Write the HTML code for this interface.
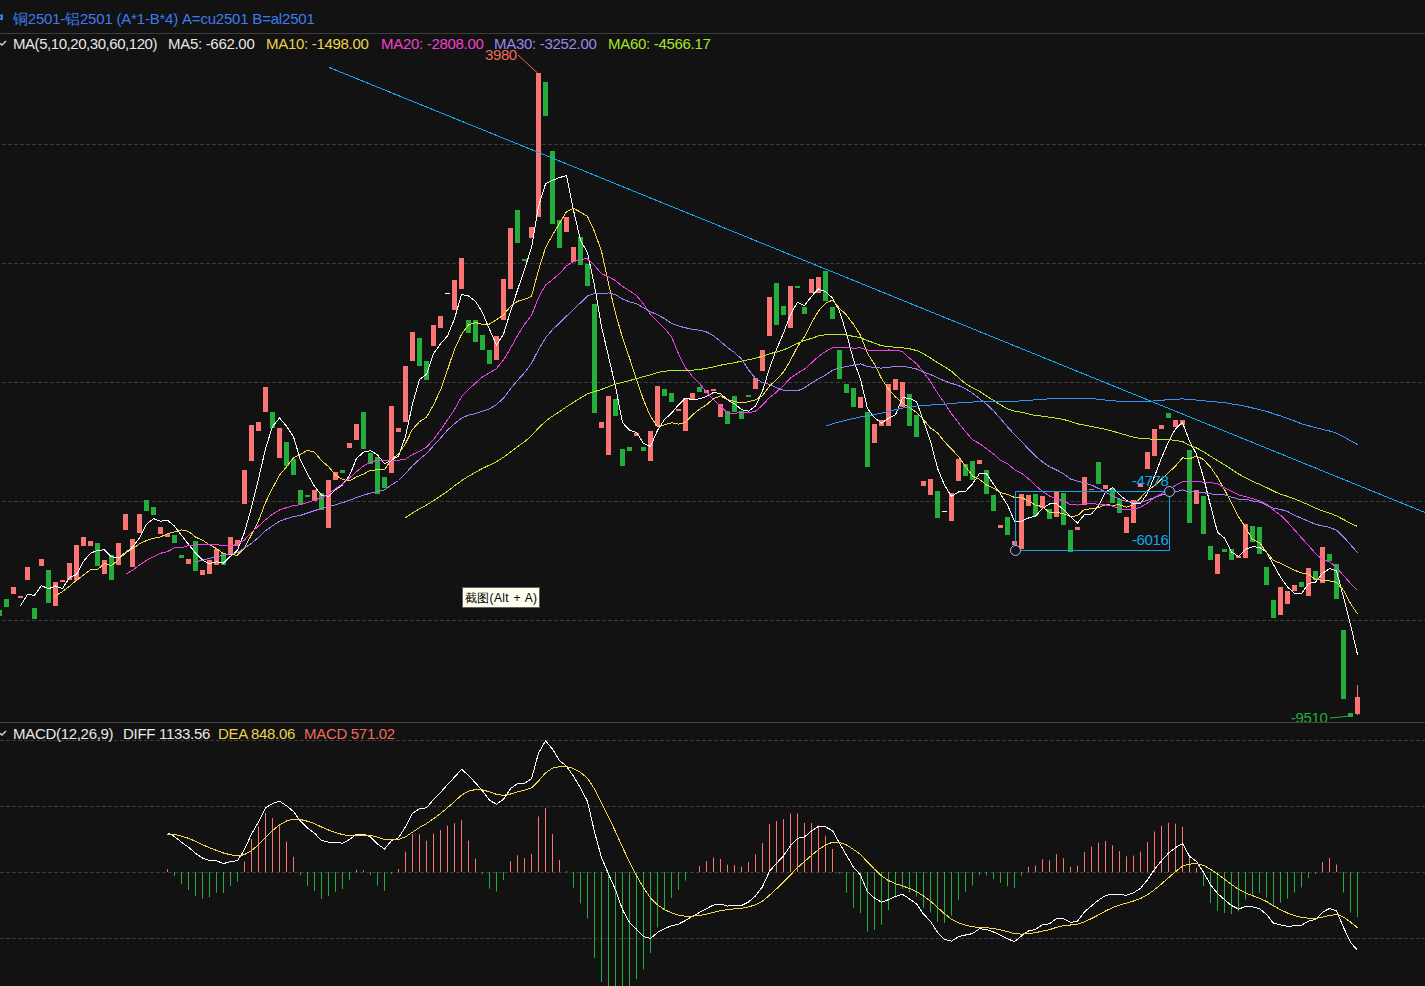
<!DOCTYPE html>
<html><head><meta charset="utf-8"><style>
html,body{margin:0;padding:0;background:#121212;width:1425px;height:986px;overflow:hidden}
svg{position:absolute;left:0;top:0}
.t{position:absolute;font-family:"Liberation Sans",sans-serif;white-space:nowrap}
</style></head><body>
<svg width="1425" height="986" viewBox="0 0 1425 986">
<line x1="0" y1="33.5" x2="1425" y2="33.5" stroke="#3c3c3c"/>
<line x1="0" y1="722.5" x2="1425" y2="722.5" stroke="#444"/>
<line x1="0" y1="144.5" x2="1425" y2="144.5" stroke="#3a3a3a" stroke-width="1" stroke-dasharray="4,2" stroke-dashoffset="4" shape-rendering="crispEdges"/><line x1="0" y1="263.5" x2="1425" y2="263.5" stroke="#3a3a3a" stroke-width="1" stroke-dasharray="4,2" stroke-dashoffset="4" shape-rendering="crispEdges"/><line x1="0" y1="382.5" x2="1425" y2="382.5" stroke="#3a3a3a" stroke-width="1" stroke-dasharray="4,2" stroke-dashoffset="4" shape-rendering="crispEdges"/><line x1="0" y1="501.5" x2="1425" y2="501.5" stroke="#3a3a3a" stroke-width="1" stroke-dasharray="4,2" stroke-dashoffset="4" shape-rendering="crispEdges"/><line x1="0" y1="620.5" x2="1425" y2="620.5" stroke="#3a3a3a" stroke-width="1" stroke-dasharray="4,2" stroke-dashoffset="4" shape-rendering="crispEdges"/><line x1="0" y1="740.5" x2="1425" y2="740.5" stroke="#3a3a3a" stroke-width="1" stroke-dasharray="4,2" stroke-dashoffset="0" shape-rendering="crispEdges"/><line x1="0" y1="806.5" x2="1425" y2="806.5" stroke="#3a3a3a" stroke-width="1" stroke-dasharray="4,2" stroke-dashoffset="0" shape-rendering="crispEdges"/><line x1="0" y1="872.5" x2="1425" y2="872.5" stroke="#3a3a3a" stroke-width="1" stroke-dasharray="4,2" stroke-dashoffset="0" shape-rendering="crispEdges"/><line x1="0" y1="938.5" x2="1425" y2="938.5" stroke="#3a3a3a" stroke-width="1" stroke-dasharray="4,2" stroke-dashoffset="0" shape-rendering="crispEdges"/><g shape-rendering="crispEdges"><rect x="-3" y="610" width="5" height="6" fill="#23ad3a"/><rect x="4" y="599" width="5" height="8" fill="#23ad3a"/><rect x="11" y="587" width="5" height="7" fill="#fa7474"/><rect x="18" y="596" width="5" height="2" fill="#fa7474"/><rect x="25" y="567" width="5" height="13" fill="#fa7474"/><rect x="32" y="608" width="5" height="11" fill="#23ad3a"/><rect x="39" y="559" width="5" height="7" fill="#fa7474"/><rect x="46" y="570" width="5" height="33" fill="#23ad3a"/><rect x="53" y="582" width="5" height="24" fill="#fa7474"/><rect x="60" y="580" width="5" height="2" fill="#fa7474"/><rect x="67" y="563" width="5" height="17" fill="#fa7474"/><rect x="74" y="545" width="5" height="35" fill="#fa7474"/><rect x="81" y="537" width="5" height="9" fill="#fa7474"/><rect x="88" y="541" width="5" height="5" fill="#fa7474"/><rect x="95" y="543" width="5" height="23" fill="#23ad3a"/><rect x="102" y="560" width="5" height="14" fill="#fa7474"/><rect x="109" y="555" width="5" height="25" fill="#23ad3a"/><rect x="116" y="543" width="5" height="22" fill="#fa7474"/><rect x="123" y="514" width="5" height="16" fill="#fa7474"/><rect x="130" y="539" width="5" height="28" fill="#fa7474"/><rect x="137" y="514" width="5" height="19" fill="#fa7474"/><rect x="144" y="500" width="5" height="11" fill="#23ad3a"/><rect x="151" y="507" width="5" height="8" fill="#23ad3a"/><rect x="158" y="527" width="5" height="7" fill="#fa7474"/><rect x="165" y="534" width="5" height="3" fill="#fa7474"/><rect x="172" y="535" width="5" height="8" fill="#23ad3a"/><rect x="179" y="555" width="5" height="3" fill="#23ad3a"/><rect x="186" y="559" width="5" height="5" fill="#fa7474"/><rect x="193" y="541" width="5" height="30" fill="#23ad3a"/><rect x="200" y="570" width="5" height="5" fill="#fa7474"/><rect x="207" y="560" width="5" height="14" fill="#fa7474"/><rect x="214" y="549" width="5" height="16" fill="#fa7474"/><rect x="221" y="553" width="5" height="12" fill="#23ad3a"/><rect x="228" y="537" width="5" height="17" fill="#fa7474"/><rect x="235" y="540" width="5" height="6" fill="#fa7474"/><rect x="242" y="470" width="5" height="34" fill="#fa7474"/><rect x="249" y="425" width="5" height="36" fill="#fa7474"/><rect x="256" y="422" width="5" height="9" fill="#fa7474"/><rect x="263" y="387" width="5" height="25" fill="#fa7474"/><rect x="270" y="412" width="5" height="16" fill="#23ad3a"/><rect x="277" y="428" width="5" height="30" fill="#fa7474"/><rect x="284" y="442" width="5" height="24" fill="#23ad3a"/><rect x="291" y="459" width="5" height="16" fill="#23ad3a"/><rect x="298" y="490" width="5" height="14" fill="#23ad3a"/><rect x="305" y="495" width="5" height="2" fill="#23ad3a"/><rect x="312" y="490" width="5" height="11" fill="#fa7474"/><rect x="319" y="493" width="5" height="17" fill="#23ad3a"/><rect x="326" y="480" width="5" height="48" fill="#fa7474"/><rect x="333" y="472" width="5" height="8" fill="#fa7474"/><rect x="340" y="470" width="5" height="3" fill="#23ad3a"/><rect x="347" y="443" width="5" height="5" fill="#fa7474"/><rect x="354" y="424" width="5" height="16" fill="#fa7474"/><rect x="361" y="412" width="5" height="37" fill="#23ad3a"/><rect x="368" y="453" width="5" height="11" fill="#23ad3a"/><rect x="375" y="457" width="5" height="37" fill="#23ad3a"/><rect x="382" y="477" width="5" height="11" fill="#23ad3a"/><rect x="389" y="406" width="5" height="67" fill="#fa7474"/><rect x="396" y="428" width="5" height="4" fill="#fa7474"/><rect x="403" y="366" width="5" height="56" fill="#fa7474"/><rect x="410" y="332" width="5" height="29" fill="#fa7474"/><rect x="417" y="338" width="5" height="28" fill="#23ad3a"/><rect x="424" y="361" width="5" height="19" fill="#23ad3a"/><rect x="431" y="325" width="5" height="21" fill="#fa7474"/><rect x="438" y="316" width="5" height="12" fill="#fa7474"/><rect x="445" y="293" width="5" height="1" fill="#ffffff"/><rect x="452" y="280" width="5" height="30" fill="#fa7474"/><rect x="459" y="258" width="5" height="31" fill="#fa7474"/><rect x="466" y="320" width="5" height="13" fill="#23ad3a"/><rect x="473" y="320" width="5" height="22" fill="#23ad3a"/><rect x="480" y="335" width="5" height="15" fill="#23ad3a"/><rect x="487" y="350" width="5" height="14" fill="#23ad3a"/><rect x="494" y="336" width="5" height="24" fill="#fa7474"/><rect x="501" y="279" width="5" height="41" fill="#fa7474"/><rect x="508" y="228" width="5" height="61" fill="#fa7474"/><rect x="515" y="210" width="5" height="33" fill="#23ad3a"/><rect x="522" y="259" width="5" height="2" fill="#23ad3a"/><rect x="529" y="227" width="5" height="11" fill="#fa7474"/><rect x="536" y="73" width="5" height="144" fill="#fa7474"/><rect x="543" y="82" width="5" height="34" fill="#23ad3a"/><rect x="550" y="151" width="5" height="73" fill="#23ad3a"/><rect x="557" y="220" width="5" height="28" fill="#23ad3a"/><rect x="564" y="217" width="5" height="15" fill="#fa7474"/><rect x="571" y="247" width="5" height="15" fill="#fa7474"/><rect x="578" y="237" width="5" height="28" fill="#23ad3a"/><rect x="585" y="264" width="5" height="22" fill="#23ad3a"/><rect x="592" y="304" width="5" height="109" fill="#23ad3a"/><rect x="599" y="422" width="5" height="6" fill="#fa7474"/><rect x="606" y="396" width="5" height="59" fill="#fa7474"/><rect x="613" y="399" width="5" height="17" fill="#23ad3a"/><rect x="620" y="449" width="5" height="17" fill="#23ad3a"/><rect x="627" y="447" width="5" height="4" fill="#23ad3a"/><rect x="634" y="433" width="5" height="3" fill="#fa7474"/><rect x="641" y="447" width="5" height="4" fill="#23ad3a"/><rect x="648" y="431" width="5" height="30" fill="#fa7474"/><rect x="655" y="386" width="5" height="40" fill="#fa7474"/><rect x="662" y="389" width="5" height="7" fill="#23ad3a"/><rect x="669" y="393" width="5" height="9" fill="#23ad3a"/><rect x="676" y="409" width="5" height="2" fill="#fa7474"/><rect x="683" y="398" width="5" height="33" fill="#fa7474"/><rect x="690" y="393" width="5" height="6" fill="#fa7474"/><rect x="697" y="387" width="5" height="5" fill="#23ad3a"/><rect x="704" y="390" width="5" height="3" fill="#fa7474"/><rect x="711" y="389" width="5" height="2" fill="#fa7474"/><rect x="718" y="404" width="5" height="13" fill="#fa7474"/><rect x="725" y="411" width="5" height="13" fill="#23ad3a"/><rect x="732" y="396" width="5" height="16" fill="#23ad3a"/><rect x="739" y="411" width="5" height="8" fill="#23ad3a"/><rect x="746" y="395" width="5" height="2" fill="#23ad3a"/><rect x="753" y="378" width="5" height="11" fill="#fa7474"/><rect x="760" y="350" width="5" height="21" fill="#fa7474"/><rect x="767" y="297" width="5" height="39" fill="#fa7474"/><rect x="774" y="283" width="5" height="42" fill="#23ad3a"/><rect x="781" y="306" width="5" height="9" fill="#23ad3a"/><rect x="788" y="286" width="5" height="42" fill="#fa7474"/><rect x="795" y="286" width="5" height="2" fill="#23ad3a"/><rect x="802" y="307" width="5" height="7" fill="#23ad3a"/><rect x="809" y="279" width="5" height="14" fill="#fa7474"/><rect x="816" y="277" width="5" height="16" fill="#fa7474"/><rect x="823" y="271" width="5" height="30" fill="#23ad3a"/><rect x="830" y="307" width="5" height="12" fill="#23ad3a"/><rect x="837" y="350" width="5" height="29" fill="#23ad3a"/><rect x="844" y="384" width="5" height="9" fill="#23ad3a"/><rect x="851" y="388" width="5" height="19" fill="#23ad3a"/><rect x="858" y="397" width="5" height="11" fill="#fa7474"/><rect x="865" y="412" width="5" height="55" fill="#23ad3a"/><rect x="872" y="424" width="5" height="19" fill="#fa7474"/><rect x="879" y="420" width="5" height="6" fill="#fa7474"/><rect x="886" y="384" width="5" height="42" fill="#fa7474"/><rect x="893" y="379" width="5" height="11" fill="#fa7474"/><rect x="900" y="382" width="5" height="25" fill="#fa7474"/><rect x="907" y="394" width="5" height="32" fill="#23ad3a"/><rect x="914" y="415" width="5" height="22" fill="#23ad3a"/><rect x="921" y="481" width="5" height="5" fill="#fa7474"/><rect x="928" y="479" width="5" height="16" fill="#fa7474"/><rect x="935" y="491" width="5" height="27" fill="#23ad3a"/><rect x="942" y="511" width="5" height="1" fill="#ffffff"/><rect x="949" y="493" width="5" height="28" fill="#fa7474"/><rect x="956" y="459" width="5" height="22" fill="#fa7474"/><rect x="963" y="464" width="5" height="12" fill="#23ad3a"/><rect x="970" y="461" width="5" height="19" fill="#23ad3a"/><rect x="977" y="460" width="5" height="4" fill="#fa7474"/><rect x="984" y="470" width="5" height="24" fill="#23ad3a"/><rect x="991" y="495" width="5" height="16" fill="#23ad3a"/><rect x="998" y="525" width="5" height="3" fill="#fa7474"/><rect x="1005" y="517" width="5" height="18" fill="#23ad3a"/><rect x="1012" y="541" width="5" height="4" fill="#fa7474"/><rect x="1019" y="494" width="5" height="55" fill="#fa7474"/><rect x="1026" y="495" width="5" height="11" fill="#fa7474"/><rect x="1033" y="494" width="5" height="22" fill="#23ad3a"/><rect x="1040" y="496" width="5" height="12" fill="#fa7474"/><rect x="1047" y="509" width="5" height="10" fill="#23ad3a"/><rect x="1054" y="492" width="5" height="25" fill="#fa7474"/><rect x="1061" y="493" width="5" height="32" fill="#23ad3a"/><rect x="1068" y="530" width="5" height="22" fill="#23ad3a"/><rect x="1075" y="527" width="5" height="3" fill="#fa7474"/><rect x="1082" y="477" width="5" height="28" fill="#fa7474"/><rect x="1089" y="489" width="5" height="1" fill="#fa7474"/><rect x="1096" y="462" width="5" height="22" fill="#23ad3a"/><rect x="1103" y="485" width="5" height="4" fill="#fa7474"/><rect x="1110" y="488" width="5" height="15" fill="#23ad3a"/><rect x="1117" y="499" width="5" height="14" fill="#23ad3a"/><rect x="1124" y="517" width="5" height="16" fill="#fa7474"/><rect x="1131" y="500" width="5" height="23" fill="#fa7474"/><rect x="1138" y="484" width="5" height="3" fill="#fa7474"/><rect x="1145" y="452" width="5" height="17" fill="#fa7474"/><rect x="1152" y="429" width="5" height="27" fill="#fa7474"/><rect x="1159" y="425" width="5" height="4" fill="#fa7474"/><rect x="1166" y="413" width="5" height="5" fill="#23ad3a"/><rect x="1173" y="420" width="5" height="7" fill="#fa7474"/><rect x="1180" y="420" width="5" height="5" fill="#fa7474"/><rect x="1187" y="450" width="5" height="73" fill="#23ad3a"/><rect x="1194" y="490" width="5" height="14" fill="#fa7474"/><rect x="1201" y="496" width="5" height="38" fill="#23ad3a"/><rect x="1208" y="546" width="5" height="14" fill="#23ad3a"/><rect x="1215" y="554" width="5" height="20" fill="#fa7474"/><rect x="1222" y="549" width="5" height="3" fill="#23ad3a"/><rect x="1229" y="549" width="5" height="11" fill="#23ad3a"/><rect x="1236" y="556" width="5" height="2" fill="#fa7474"/><rect x="1243" y="524" width="5" height="34" fill="#fa7474"/><rect x="1250" y="526" width="5" height="16" fill="#23ad3a"/><rect x="1257" y="527" width="5" height="27" fill="#23ad3a"/><rect x="1264" y="567" width="5" height="18" fill="#23ad3a"/><rect x="1271" y="600" width="5" height="18" fill="#23ad3a"/><rect x="1278" y="587" width="5" height="28" fill="#fa7474"/><rect x="1285" y="591" width="5" height="13" fill="#fa7474"/><rect x="1292" y="585" width="5" height="6" fill="#fa7474"/><rect x="1299" y="582" width="5" height="5" fill="#23ad3a"/><rect x="1306" y="568" width="5" height="28" fill="#fa7474"/><rect x="1313" y="571" width="5" height="9" fill="#23ad3a"/><rect x="1320" y="547" width="5" height="36" fill="#fa7474"/><rect x="1327" y="554" width="5" height="7" fill="#23ad3a"/><rect x="1334" y="564" width="5" height="35" fill="#23ad3a"/><rect x="1341" y="630" width="5" height="69" fill="#23ad3a"/><rect x="1348" y="713" width="5" height="4" fill="#23ad3a"/><rect x="1355" y="697" width="5" height="17" fill="#fa7474"/></g><rect x="1357" y="685" width="1" height="30" fill="#fa7474" shape-rendering="crispEdges"/><polyline points="20.5,605.60 27.5,594.60 34.5,595.20 41.5,585.60 48.5,588.80 55.5,586.00 62.5,588.60 69.5,577.40 76.5,574.60 83.5,561.40 90.5,553.20 97.5,550.40 104.5,549.80 111.5,556.80 118.5,558.00 125.5,552.60 132.5,547.20 139.5,538.00 146.5,524.20 153.5,518.60 160.5,521.20 167.5,520.20 174.5,526.00 181.5,535.40 188.5,544.20 195.5,553.00 202.5,560.20 209.5,563.60 216.5,561.80 223.5,563.00 230.5,556.20 237.5,550.20 244.5,532.20 251.5,507.40 258.5,478.80 265.5,448.80 272.5,426.40 279.5,418.00 286.5,426.20 293.5,436.80 300.5,460.20 307.5,474.00 314.5,486.40 321.5,495.20 328.5,496.20 335.5,489.80 342.5,485.00 349.5,475.60 356.5,458.40 363.5,452.20 370.5,450.60 377.5,454.80 384.5,463.80 391.5,460.20 398.5,456.00 405.5,436.40 412.5,404.00 419.5,379.60 426.5,374.40 433.5,353.80 440.5,343.80 447.5,336.00 454.5,318.80 461.5,294.40 468.5,296.00 475.5,301.20 482.5,312.60 489.5,329.40 496.5,345.00 503.5,334.20 510.5,311.40 517.5,290.00 524.5,269.40 531.5,247.60 538.5,206.40 545.5,184.00 552.5,180.20 559.5,177.60 566.5,175.60 573.5,210.40 580.5,240.20 587.5,252.60 594.5,285.60 601.5,326.60 608.5,356.40 615.5,386.60 622.5,422.60 629.5,430.20 636.5,432.40 643.5,443.40 650.5,446.40 657.5,430.40 664.5,419.40 671.5,413.20 678.5,404.80 685.5,398.20 692.5,399.60 699.5,398.80 706.5,396.40 713.5,392.40 720.5,393.60 727.5,399.80 734.5,403.80 741.5,409.60 748.5,411.20 755.5,406.00 762.5,391.20 769.5,368.20 776.5,349.40 783.5,333.00 790.5,314.60 797.5,302.20 804.5,305.60 811.5,296.40 818.5,288.80 825.5,291.80 832.5,298.00 839.5,311.00 846.5,333.80 853.5,359.80 860.5,379.00 867.5,408.60 874.5,417.60 881.5,423.00 888.5,418.40 895.5,414.80 902.5,397.80 909.5,398.20 916.5,401.60 923.5,421.00 930.5,441.00 937.5,468.20 944.5,485.20 951.5,496.40 958.5,492.00 965.5,491.40 972.5,483.80 979.5,473.60 986.5,473.80 993.5,484.20 1000.5,494.00 1007.5,505.00 1014.5,521.20 1021.5,521.20 1028.5,518.00 1035.5,516.20 1042.5,508.40 1049.5,504.00 1056.5,503.60 1063.5,509.60 1070.5,516.80 1077.5,523.00 1084.5,514.60 1091.5,514.00 1098.5,505.80 1105.5,492.40 1112.5,487.60 1119.5,494.80 1126.5,500.40 1133.5,503.60 1140.5,503.40 1147.5,493.20 1154.5,476.40 1161.5,458.00 1168.5,441.60 1175.5,428.80 1182.5,422.40 1189.5,441.20 1196.5,454.20 1203.5,477.40 1210.5,505.40 1217.5,532.20 1224.5,538.00 1231.5,552.00 1238.5,556.40 1245.5,549.20 1252.5,546.80 1259.5,547.20 1266.5,552.20 1273.5,564.60 1280.5,577.20 1287.5,587.00 1294.5,593.20 1301.5,593.60 1308.5,583.60 1315.5,582.20 1322.5,573.40 1329.5,568.60 1336.5,571.00 1343.5,597.20 1350.5,624.60 1357.5,654.60" fill="none" stroke="#ffffff" stroke-width="1" shape-rendering="crispEdges" /><polyline points="55.5,595.80 62.5,591.60 69.5,586.30 76.5,580.10 83.5,575.10 90.5,569.60 97.5,569.50 104.5,563.60 111.5,565.70 118.5,559.70 125.5,552.90 132.5,548.80 139.5,543.90 146.5,540.50 153.5,538.30 160.5,536.90 167.5,533.70 174.5,532.00 181.5,529.80 188.5,531.40 195.5,537.10 202.5,540.20 209.5,544.80 216.5,548.60 223.5,553.60 230.5,554.60 237.5,555.20 244.5,547.90 251.5,534.60 258.5,520.90 265.5,502.50 272.5,488.30 279.5,475.10 286.5,466.80 293.5,457.80 300.5,454.50 307.5,450.20 314.5,452.20 321.5,460.70 328.5,466.50 335.5,475.00 342.5,479.50 349.5,481.00 356.5,476.80 363.5,474.20 370.5,470.20 377.5,469.90 384.5,469.70 391.5,459.30 398.5,454.10 405.5,443.50 412.5,429.40 419.5,421.70 426.5,417.30 433.5,404.90 440.5,390.10 447.5,370.00 454.5,349.20 461.5,334.40 468.5,324.90 475.5,322.50 482.5,324.30 489.5,324.10 496.5,319.70 503.5,315.10 510.5,306.30 517.5,301.30 524.5,299.40 531.5,296.30 538.5,270.30 545.5,247.70 552.5,235.10 559.5,223.50 566.5,211.60 573.5,208.40 580.5,212.10 587.5,216.40 594.5,231.60 601.5,251.10 608.5,283.40 615.5,313.40 622.5,337.60 629.5,357.90 636.5,379.50 643.5,399.90 650.5,416.50 657.5,426.50 664.5,424.80 671.5,422.80 678.5,424.10 685.5,422.30 692.5,415.00 699.5,409.10 706.5,404.80 713.5,398.60 720.5,395.90 727.5,399.70 734.5,401.30 741.5,403.00 748.5,401.80 755.5,399.80 762.5,395.50 769.5,386.00 776.5,379.50 783.5,372.10 790.5,360.30 797.5,346.70 804.5,336.90 811.5,322.90 818.5,310.90 825.5,303.20 832.5,300.10 839.5,308.30 846.5,315.10 853.5,324.30 860.5,335.40 867.5,353.30 874.5,364.30 881.5,378.40 888.5,389.10 895.5,396.90 902.5,403.20 909.5,407.90 916.5,412.30 923.5,419.70 930.5,427.90 937.5,433.00 944.5,441.70 951.5,449.00 958.5,456.50 965.5,466.20 972.5,476.00 979.5,479.40 986.5,485.10 993.5,488.10 1000.5,492.70 1007.5,494.40 1014.5,497.40 1021.5,497.50 1028.5,501.10 1035.5,505.10 1042.5,506.70 1049.5,512.60 1056.5,512.40 1063.5,513.80 1070.5,516.50 1077.5,515.70 1084.5,509.30 1091.5,508.80 1098.5,507.70 1105.5,504.60 1112.5,505.30 1119.5,504.70 1126.5,507.20 1133.5,504.70 1140.5,497.90 1147.5,490.40 1154.5,485.60 1161.5,479.20 1168.5,472.60 1175.5,466.10 1182.5,457.80 1189.5,458.80 1196.5,456.10 1203.5,459.50 1210.5,467.10 1217.5,477.30 1224.5,489.60 1231.5,503.10 1238.5,516.90 1245.5,527.30 1252.5,539.50 1259.5,542.60 1266.5,552.10 1273.5,560.50 1280.5,563.20 1287.5,566.90 1294.5,570.20 1301.5,572.90 1308.5,574.10 1315.5,579.70 1322.5,580.20 1329.5,580.90 1336.5,582.30 1343.5,590.40 1350.5,603.40 1357.5,614.00" fill="none" stroke="#f2d84a" stroke-width="1" shape-rendering="crispEdges" /><polyline points="125.5,574.35 132.5,570.20 139.5,565.10 146.5,560.30 153.5,556.70 160.5,553.25 167.5,551.60 174.5,547.80 181.5,547.75 188.5,545.55 195.5,545.00 202.5,544.50 209.5,544.35 216.5,544.55 223.5,545.95 230.5,545.75 237.5,544.45 244.5,539.95 251.5,532.20 258.5,526.15 265.5,519.80 272.5,514.25 279.5,509.95 286.5,507.70 293.5,505.70 300.5,504.55 307.5,502.70 314.5,500.05 321.5,497.65 328.5,493.70 335.5,488.75 342.5,483.90 349.5,478.05 356.5,471.80 363.5,466.00 370.5,462.35 377.5,460.05 384.5,460.95 391.5,460.00 398.5,460.30 405.5,459.25 412.5,454.45 419.5,451.35 426.5,447.05 433.5,439.55 440.5,430.15 447.5,419.95 454.5,409.45 461.5,396.85 468.5,389.50 475.5,383.00 482.5,376.85 489.5,372.90 496.5,368.50 503.5,360.00 510.5,348.20 517.5,335.65 524.5,324.30 531.5,315.35 538.5,297.60 545.5,285.10 552.5,279.70 559.5,273.80 566.5,265.65 573.5,261.75 580.5,259.20 587.5,258.85 594.5,265.50 601.5,273.70 608.5,276.85 615.5,280.55 622.5,286.35 629.5,290.70 636.5,295.55 643.5,304.15 650.5,314.30 657.5,321.45 664.5,328.20 671.5,336.95 678.5,353.75 685.5,367.85 692.5,376.30 699.5,383.50 706.5,392.15 713.5,399.25 720.5,406.20 727.5,413.10 734.5,413.05 741.5,412.90 748.5,412.95 755.5,411.05 762.5,405.25 769.5,397.55 776.5,392.15 783.5,385.35 790.5,378.10 797.5,373.20 804.5,369.10 811.5,362.95 818.5,356.35 825.5,351.50 832.5,347.80 839.5,347.15 846.5,347.30 853.5,348.20 860.5,347.85 867.5,350.00 874.5,350.60 881.5,350.65 888.5,350.00 895.5,350.05 902.5,351.65 909.5,358.10 916.5,363.70 923.5,372.00 930.5,381.65 937.5,393.15 944.5,403.00 951.5,413.70 958.5,422.80 965.5,431.55 972.5,439.60 979.5,443.65 986.5,448.70 993.5,453.90 1000.5,460.30 1007.5,463.70 1014.5,469.55 1021.5,473.25 1028.5,478.80 1035.5,485.65 1042.5,491.35 1049.5,496.00 1056.5,498.75 1063.5,500.95 1070.5,504.60 1077.5,505.05 1084.5,503.35 1091.5,503.15 1098.5,504.40 1105.5,504.85 1112.5,506.00 1119.5,508.65 1126.5,509.80 1133.5,509.25 1140.5,507.20 1147.5,503.05 1154.5,497.45 1161.5,494.00 1168.5,490.15 1175.5,485.35 1182.5,481.55 1189.5,481.75 1196.5,481.65 1203.5,482.10 1210.5,482.50 1217.5,483.85 1224.5,487.60 1231.5,491.15 1238.5,494.75 1245.5,496.70 1252.5,498.65 1259.5,500.70 1266.5,504.10 1273.5,510.00 1280.5,515.15 1287.5,522.10 1294.5,529.90 1301.5,538.00 1308.5,545.50 1315.5,553.50 1322.5,559.85 1329.5,561.75 1336.5,567.20 1343.5,575.45 1350.5,583.30 1357.5,590.45" fill="none" stroke="#ee3ee6" stroke-width="1" shape-rendering="crispEdges" /><polyline points="195.5,561.93 202.5,560.20 209.5,558.33 216.5,556.40 223.5,555.67 230.5,553.70 237.5,552.80 244.5,547.83 251.5,543.37 258.5,537.33 265.5,530.83 272.5,525.77 279.5,521.27 286.5,518.63 293.5,516.57 300.5,515.33 307.5,513.03 314.5,510.70 321.5,508.37 328.5,506.27 335.5,504.87 342.5,502.67 349.5,500.30 356.5,497.40 363.5,495.20 370.5,493.10 377.5,491.77 384.5,489.93 391.5,484.87 398.5,480.50 405.5,473.67 412.5,465.73 419.5,459.27 426.5,453.63 433.5,445.63 440.5,438.27 447.5,430.03 454.5,423.70 461.5,418.13 468.5,415.17 475.5,413.67 482.5,411.07 489.5,408.93 496.5,404.60 503.5,398.07 510.5,388.87 517.5,380.40 524.5,372.77 531.5,363.33 538.5,349.77 545.5,337.90 552.5,329.60 559.5,323.10 566.5,316.20 573.5,309.47 580.5,302.83 587.5,295.90 594.5,293.40 601.5,293.93 608.5,292.87 615.5,294.53 622.5,299.00 629.5,301.83 636.5,303.60 643.5,307.80 650.5,311.63 657.5,314.73 664.5,318.60 671.5,323.40 678.5,325.93 685.5,327.80 692.5,329.23 699.5,330.17 706.5,331.97 713.5,335.63 720.5,341.50 727.5,347.53 734.5,352.57 741.5,358.97 748.5,369.77 755.5,378.50 762.5,382.70 769.5,384.33 776.5,387.93 783.5,390.20 790.5,390.90 797.5,390.97 804.5,387.67 811.5,382.90 818.5,378.93 825.5,375.10 832.5,370.20 839.5,367.80 846.5,366.47 853.5,365.00 860.5,363.87 867.5,366.57 874.5,367.50 881.5,368.10 888.5,367.27 895.5,366.63 902.5,366.27 909.5,367.40 916.5,368.97 923.5,372.03 930.5,374.53 937.5,377.67 944.5,380.97 951.5,383.43 958.5,385.50 965.5,388.77 972.5,393.10 979.5,398.53 986.5,404.17 993.5,410.70 1000.5,418.67 1007.5,426.90 1014.5,434.47 1021.5,441.63 1028.5,448.90 1035.5,456.07 1042.5,461.97 1049.5,466.63 1056.5,469.93 1063.5,473.87 1070.5,479.03 1077.5,481.03 1084.5,482.80 1091.5,485.10 1098.5,488.43 1105.5,491.97 1112.5,496.00 1119.5,498.90 1126.5,501.57 1133.5,502.20 1140.5,502.37 1147.5,500.17 1154.5,497.43 1161.5,495.17 1168.5,493.80 1175.5,491.93 1182.5,489.93 1189.5,492.03 1196.5,491.90 1203.5,492.67 1210.5,493.83 1217.5,494.47 1224.5,494.83 1231.5,497.03 1238.5,499.07 1245.5,499.33 1252.5,500.87 1259.5,502.03 1266.5,505.13 1273.5,508.23 1280.5,509.40 1287.5,511.53 1294.5,515.13 1301.5,518.40 1308.5,521.20 1315.5,524.37 1322.5,525.83 1329.5,527.43 1336.5,530.17 1343.5,536.80 1350.5,544.57 1357.5,552.73" fill="none" stroke="#a57ff2" stroke-width="1" shape-rendering="crispEdges" /><polyline points="405.5,517.80 412.5,512.97 419.5,508.80 426.5,505.02 433.5,500.65 440.5,495.98 447.5,491.42 454.5,485.77 461.5,480.75 468.5,476.25 475.5,472.25 482.5,468.42 489.5,465.10 496.5,461.62 503.5,457.32 510.5,452.10 517.5,446.72 524.5,441.73 531.5,435.85 538.5,428.02 545.5,421.38 552.5,416.13 559.5,411.70 566.5,406.80 573.5,402.33 580.5,397.97 587.5,393.83 594.5,391.67 601.5,389.40 608.5,386.68 615.5,384.10 622.5,382.37 629.5,380.55 636.5,378.62 643.5,376.72 650.5,374.95 657.5,372.38 664.5,371.15 671.5,370.77 678.5,370.55 685.5,370.73 692.5,370.15 699.5,369.55 706.5,368.28 713.5,366.85 720.5,365.18 727.5,363.97 734.5,362.67 741.5,361.15 748.5,359.77 755.5,358.20 762.5,356.15 769.5,353.72 776.5,352.07 783.5,349.83 790.5,346.87 797.5,343.43 804.5,340.53 811.5,338.42 818.5,335.90 825.5,334.82 832.5,334.60 839.5,334.82 846.5,335.03 853.5,336.40 860.5,337.75 867.5,340.65 874.5,343.05 881.5,345.75 888.5,346.60 895.5,347.22 902.5,347.75 909.5,348.78 916.5,350.47 923.5,353.83 930.5,358.02 937.5,362.60 944.5,366.77 951.5,371.20 958.5,377.63 965.5,383.63 972.5,387.90 979.5,391.43 986.5,396.05 993.5,400.45 1000.5,404.78 1007.5,408.93 1014.5,411.07 1021.5,412.27 1028.5,413.92 1035.5,415.58 1042.5,416.08 1049.5,417.22 1056.5,418.20 1063.5,419.43 1070.5,421.45 1077.5,423.80 1084.5,425.15 1091.5,426.60 1098.5,427.85 1105.5,429.30 1112.5,431.13 1119.5,433.15 1126.5,435.27 1133.5,437.12 1140.5,438.45 1147.5,438.92 1154.5,439.20 1161.5,439.30 1168.5,439.65 1175.5,440.35 1182.5,441.52 1189.5,445.28 1196.5,448.03 1203.5,451.68 1210.5,456.25 1217.5,460.68 1224.5,464.65 1231.5,469.33 1238.5,473.98 1245.5,477.70 1252.5,481.42 1259.5,484.33 1266.5,487.53 1273.5,491.05 1280.5,494.22 1287.5,496.28 1294.5,498.97 1301.5,501.75 1308.5,504.82 1315.5,508.17 1322.5,510.92 1329.5,513.17 1336.5,515.87 1343.5,519.50 1350.5,523.47 1357.5,526.45" fill="none" stroke="#b4ec28" stroke-width="1" shape-rendering="crispEdges" /><polyline points="825.5,426.31 832.5,423.78 839.5,421.81 846.5,420.02 853.5,418.52 860.5,416.87 867.5,416.03 874.5,414.41 881.5,413.25 888.5,411.43 895.5,409.73 902.5,408.08 909.5,406.94 916.5,406.04 923.5,405.57 930.5,405.06 937.5,404.66 944.5,404.25 951.5,403.52 958.5,402.82 965.5,402.51 972.5,402.02 979.5,401.57 986.5,401.43 993.5,401.39 1000.5,401.38 1007.5,401.38 1014.5,401.37 1021.5,400.83 1028.5,400.30 1035.5,399.84 1042.5,399.23 1049.5,398.88 1056.5,398.41 1063.5,398.07 1070.5,398.20 1077.5,398.09 1084.5,398.15 1091.5,398.68 1098.5,399.20 1105.5,400.02 1112.5,400.64 1119.5,401.35 1126.5,401.77 1133.5,401.98 1140.5,401.82 1147.5,401.44 1154.5,400.93 1161.5,400.23 1168.5,399.71 1175.5,399.27 1182.5,398.83 1189.5,399.50 1196.5,400.05 1203.5,400.76 1210.5,401.56 1217.5,402.06 1224.5,402.59 1231.5,403.88 1238.5,404.94 1245.5,406.26 1252.5,408.01 1259.5,409.57 1266.5,411.28 1273.5,413.73 1280.5,415.98 1287.5,418.47 1294.5,421.01 1301.5,423.75 1308.5,425.71 1315.5,427.69 1322.5,429.33 1329.5,430.98 1336.5,433.17 1343.5,436.67 1350.5,440.74 1357.5,444.52" fill="none" stroke="#3a8ff2" stroke-width="1" shape-rendering="crispEdges" /><g><rect x="167" y="869.1" width="1" height="2.9" fill="#fa7474"/><rect x="174" y="872.0" width="1" height="3.9" fill="#23ad3a"/><rect x="181" y="872.0" width="1" height="12.3" fill="#23ad3a"/><rect x="188" y="872.0" width="1" height="17.9" fill="#23ad3a"/><rect x="195" y="872.0" width="1" height="23.9" fill="#23ad3a"/><rect x="202" y="872.0" width="1" height="26.8" fill="#23ad3a"/><rect x="209" y="872.0" width="1" height="25.2" fill="#23ad3a"/><rect x="216" y="872.0" width="1" height="20.7" fill="#23ad3a"/><rect x="223" y="872.0" width="1" height="21.1" fill="#23ad3a"/><rect x="230" y="872.0" width="1" height="13.8" fill="#23ad3a"/><rect x="237" y="872.0" width="1" height="9.5" fill="#23ad3a"/><rect x="244" y="861.6" width="1" height="10.4" fill="#fa7474"/><rect x="251" y="839.1" width="1" height="32.9" fill="#fa7474"/><rect x="258" y="826.4" width="1" height="45.6" fill="#fa7474"/><rect x="265" y="812.8" width="1" height="59.2" fill="#fa7474"/><rect x="272" y="818.0" width="1" height="54.0" fill="#fa7474"/><rect x="279" y="824.8" width="1" height="47.2" fill="#fa7474"/><rect x="286" y="841.7" width="1" height="30.3" fill="#fa7474"/><rect x="293" y="856.9" width="1" height="15.1" fill="#fa7474"/><rect x="300" y="872.0" width="1" height="3.3" fill="#23ad3a"/><rect x="307" y="872.0" width="1" height="13.8" fill="#23ad3a"/><rect x="314" y="872.0" width="1" height="19.0" fill="#23ad3a"/><rect x="321" y="872.0" width="1" height="26.9" fill="#23ad3a"/><rect x="328" y="872.0" width="1" height="24.1" fill="#23ad3a"/><rect x="335" y="872.0" width="1" height="19.8" fill="#23ad3a"/><rect x="342" y="872.0" width="1" height="17.1" fill="#23ad3a"/><rect x="349" y="872.0" width="1" height="7.9" fill="#23ad3a"/><rect x="356" y="869.8" width="1" height="2.2" fill="#fa7474"/><rect x="363" y="870.3" width="1" height="1.7" fill="#fa7474"/><rect x="370" y="872.0" width="1" height="3.0" fill="#23ad3a"/><rect x="377" y="872.0" width="1" height="13.7" fill="#23ad3a"/><rect x="384" y="872.0" width="1" height="18.9" fill="#23ad3a"/><rect x="391" y="872.0" width="1" height="1.9" fill="#23ad3a"/><rect x="398" y="869.0" width="1" height="3.0" fill="#fa7474"/><rect x="405" y="851.7" width="1" height="20.3" fill="#fa7474"/><rect x="412" y="834.3" width="1" height="37.7" fill="#fa7474"/><rect x="419" y="834.3" width="1" height="37.7" fill="#fa7474"/><rect x="426" y="840.6" width="1" height="31.4" fill="#fa7474"/><rect x="433" y="833.6" width="1" height="38.4" fill="#fa7474"/><rect x="440" y="830.1" width="1" height="41.9" fill="#fa7474"/><rect x="447" y="825.6" width="1" height="46.4" fill="#fa7474"/><rect x="454" y="823.2" width="1" height="48.8" fill="#fa7474"/><rect x="461" y="820.2" width="1" height="51.8" fill="#fa7474"/><rect x="468" y="840.6" width="1" height="31.4" fill="#fa7474"/><rect x="475" y="858.7" width="1" height="13.3" fill="#fa7474"/><rect x="482" y="872.0" width="1" height="2.2" fill="#23ad3a"/><rect x="489" y="872.0" width="1" height="16.7" fill="#23ad3a"/><rect x="496" y="872.0" width="1" height="19.6" fill="#23ad3a"/><rect x="503" y="872.0" width="1" height="8.0" fill="#23ad3a"/><rect x="510" y="861.3" width="1" height="10.7" fill="#fa7474"/><rect x="517" y="855.2" width="1" height="16.8" fill="#fa7474"/><rect x="524" y="858.1" width="1" height="13.9" fill="#fa7474"/><rect x="531" y="853.9" width="1" height="18.1" fill="#fa7474"/><rect x="538" y="816.4" width="1" height="55.6" fill="#fa7474"/><rect x="545" y="807.9" width="1" height="64.1" fill="#fa7474"/><rect x="552" y="833.9" width="1" height="38.1" fill="#fa7474"/><rect x="559" y="859.9" width="1" height="12.1" fill="#fa7474"/><rect x="566" y="871.3" width="1" height="0.7" fill="#fa7474"/><rect x="573" y="872.0" width="1" height="15.6" fill="#23ad3a"/><rect x="580" y="872.0" width="1" height="31.3" fill="#23ad3a"/><rect x="587" y="872.0" width="1" height="46.4" fill="#23ad3a"/><rect x="594" y="872.0" width="1" height="85.9" fill="#23ad3a"/><rect x="601" y="872.0" width="1" height="109.9" fill="#23ad3a"/><rect x="608" y="872.0" width="1" height="114.1" fill="#23ad3a"/><rect x="615" y="872.0" width="1" height="116.6" fill="#23ad3a"/><rect x="622" y="872.0" width="1" height="125.0" fill="#23ad3a"/><rect x="629" y="872.0" width="1" height="120.5" fill="#23ad3a"/><rect x="636" y="872.0" width="1" height="107.1" fill="#23ad3a"/><rect x="643" y="872.0" width="1" height="97.4" fill="#23ad3a"/><rect x="650" y="872.0" width="1" height="81.1" fill="#23ad3a"/><rect x="657" y="872.0" width="1" height="55.3" fill="#23ad3a"/><rect x="664" y="872.0" width="1" height="38.0" fill="#23ad3a"/><rect x="671" y="872.0" width="1" height="25.9" fill="#23ad3a"/><rect x="678" y="872.0" width="1" height="18.0" fill="#23ad3a"/><rect x="685" y="872.0" width="1" height="8.6" fill="#23ad3a"/><rect x="692" y="872.0" width="1" height="0.2" fill="#23ad3a"/><rect x="699" y="865.9" width="1" height="6.1" fill="#fa7474"/><rect x="706" y="861.0" width="1" height="11.0" fill="#fa7474"/><rect x="713" y="857.5" width="1" height="14.5" fill="#fa7474"/><rect x="720" y="859.0" width="1" height="13.0" fill="#fa7474"/><rect x="727" y="864.7" width="1" height="7.3" fill="#fa7474"/><rect x="734" y="865.1" width="1" height="6.9" fill="#fa7474"/><rect x="741" y="866.7" width="1" height="5.3" fill="#fa7474"/><rect x="748" y="862.0" width="1" height="10.0" fill="#fa7474"/><rect x="755" y="854.4" width="1" height="17.6" fill="#fa7474"/><rect x="762" y="843.1" width="1" height="28.9" fill="#fa7474"/><rect x="769" y="824.2" width="1" height="47.8" fill="#fa7474"/><rect x="776" y="821.2" width="1" height="50.8" fill="#fa7474"/><rect x="783" y="819.2" width="1" height="52.8" fill="#fa7474"/><rect x="790" y="813.6" width="1" height="58.4" fill="#fa7474"/><rect x="797" y="813.5" width="1" height="58.5" fill="#fa7474"/><rect x="804" y="822.9" width="1" height="49.1" fill="#fa7474"/><rect x="811" y="823.1" width="1" height="48.9" fill="#fa7474"/><rect x="818" y="825.6" width="1" height="46.4" fill="#fa7474"/><rect x="825" y="835.8" width="1" height="36.2" fill="#fa7474"/><rect x="832" y="849.0" width="1" height="23.0" fill="#fa7474"/><rect x="839" y="872.0" width="1" height="1.5" fill="#23ad3a"/><rect x="846" y="872.0" width="1" height="20.8" fill="#23ad3a"/><rect x="853" y="872.0" width="1" height="35.6" fill="#23ad3a"/><rect x="860" y="872.0" width="1" height="41.1" fill="#23ad3a"/><rect x="867" y="872.0" width="1" height="59.6" fill="#23ad3a"/><rect x="874" y="872.0" width="1" height="57.9" fill="#23ad3a"/><rect x="881" y="872.0" width="1" height="52.8" fill="#23ad3a"/><rect x="888" y="872.0" width="1" height="38.1" fill="#23ad3a"/><rect x="895" y="872.0" width="1" height="25.5" fill="#23ad3a"/><rect x="902" y="872.0" width="1" height="16.8" fill="#23ad3a"/><rect x="909" y="872.0" width="1" height="20.8" fill="#23ad3a"/><rect x="916" y="872.0" width="1" height="24.7" fill="#23ad3a"/><rect x="923" y="872.0" width="1" height="36.1" fill="#23ad3a"/><rect x="930" y="872.0" width="1" height="40.4" fill="#23ad3a"/><rect x="937" y="872.0" width="1" height="50.0" fill="#23ad3a"/><rect x="944" y="872.0" width="1" height="51.0" fill="#23ad3a"/><rect x="951" y="872.0" width="1" height="43.8" fill="#23ad3a"/><rect x="958" y="872.0" width="1" height="27.9" fill="#23ad3a"/><rect x="965" y="872.0" width="1" height="19.7" fill="#23ad3a"/><rect x="972" y="872.0" width="1" height="13.5" fill="#23ad3a"/><rect x="979" y="872.0" width="1" height="3.1" fill="#23ad3a"/><rect x="986" y="872.0" width="1" height="3.6" fill="#23ad3a"/><rect x="993" y="872.0" width="1" height="6.9" fill="#23ad3a"/><rect x="1000" y="872.0" width="1" height="10.9" fill="#23ad3a"/><rect x="1007" y="872.0" width="1" height="14.2" fill="#23ad3a"/><rect x="1014" y="872.0" width="1" height="15.9" fill="#23ad3a"/><rect x="1021" y="872.0" width="1" height="3.7" fill="#23ad3a"/><rect x="1028" y="866.9" width="1" height="5.1" fill="#fa7474"/><rect x="1035" y="865.6" width="1" height="6.4" fill="#fa7474"/><rect x="1042" y="859.2" width="1" height="12.8" fill="#fa7474"/><rect x="1049" y="860.3" width="1" height="11.7" fill="#fa7474"/><rect x="1056" y="854.1" width="1" height="17.9" fill="#fa7474"/><rect x="1063" y="858.1" width="1" height="13.9" fill="#fa7474"/><rect x="1070" y="866.9" width="1" height="5.1" fill="#fa7474"/><rect x="1077" y="865.7" width="1" height="6.3" fill="#fa7474"/><rect x="1084" y="852.1" width="1" height="19.9" fill="#fa7474"/><rect x="1091" y="846.7" width="1" height="25.3" fill="#fa7474"/><rect x="1098" y="842.6" width="1" height="29.4" fill="#fa7474"/><rect x="1105" y="841.0" width="1" height="31.0" fill="#fa7474"/><rect x="1112" y="845.3" width="1" height="26.7" fill="#fa7474"/><rect x="1119" y="851.1" width="1" height="20.9" fill="#fa7474"/><rect x="1126" y="856.3" width="1" height="15.7" fill="#fa7474"/><rect x="1133" y="855.6" width="1" height="16.4" fill="#fa7474"/><rect x="1140" y="851.7" width="1" height="20.3" fill="#fa7474"/><rect x="1147" y="842.0" width="1" height="30.0" fill="#fa7474"/><rect x="1154" y="831.5" width="1" height="40.5" fill="#fa7474"/><rect x="1161" y="825.8" width="1" height="46.2" fill="#fa7474"/><rect x="1168" y="822.7" width="1" height="49.3" fill="#fa7474"/><rect x="1175" y="823.7" width="1" height="48.3" fill="#fa7474"/><rect x="1182" y="826.9" width="1" height="45.1" fill="#fa7474"/><rect x="1189" y="856.4" width="1" height="15.6" fill="#fa7474"/><rect x="1196" y="867.8" width="1" height="4.2" fill="#fa7474"/><rect x="1203" y="872.0" width="1" height="14.0" fill="#23ad3a"/><rect x="1210" y="872.0" width="1" height="31.1" fill="#23ad3a"/><rect x="1217" y="872.0" width="1" height="38.8" fill="#23ad3a"/><rect x="1224" y="872.0" width="1" height="41.0" fill="#23ad3a"/><rect x="1231" y="872.0" width="1" height="42.1" fill="#23ad3a"/><rect x="1238" y="872.0" width="1" height="39.4" fill="#23ad3a"/><rect x="1245" y="872.0" width="1" height="27.5" fill="#23ad3a"/><rect x="1252" y="872.0" width="1" height="22.6" fill="#23ad3a"/><rect x="1259" y="872.0" width="1" height="20.9" fill="#23ad3a"/><rect x="1266" y="872.0" width="1" height="25.7" fill="#23ad3a"/><rect x="1273" y="872.0" width="1" height="34.8" fill="#23ad3a"/><rect x="1280" y="872.0" width="1" height="30.6" fill="#23ad3a"/><rect x="1287" y="872.0" width="1" height="26.6" fill="#23ad3a"/><rect x="1294" y="872.0" width="1" height="20.6" fill="#23ad3a"/><rect x="1301" y="872.0" width="1" height="15.4" fill="#23ad3a"/><rect x="1308" y="872.0" width="1" height="5.9" fill="#23ad3a"/><rect x="1315" y="872.0" width="1" height="1.7" fill="#23ad3a"/><rect x="1322" y="862.1" width="1" height="9.9" fill="#fa7474"/><rect x="1329" y="857.9" width="1" height="14.1" fill="#fa7474"/><rect x="1336" y="864.5" width="1" height="7.5" fill="#fa7474"/><rect x="1343" y="872.0" width="1" height="20.5" fill="#23ad3a"/><rect x="1350" y="872.0" width="1" height="40.5" fill="#23ad3a"/><rect x="1357" y="872.0" width="1" height="45.1" fill="#23ad3a"/></g><polyline points="167.5,832.58 174.5,836.50 181.5,842.26 188.5,847.25 195.5,853.27 202.5,858.04 209.5,860.43 216.5,860.76 223.5,863.58 230.5,861.63 237.5,860.68 244.5,849.46 251.5,834.10 258.5,822.04 265.5,807.86 272.5,803.70 279.5,801.21 286.5,805.83 293.5,811.57 300.5,821.15 307.5,828.17 314.5,833.12 321.5,840.46 328.5,842.03 335.5,842.39 342.5,843.15 349.5,839.54 356.5,834.20 363.5,834.23 370.5,836.96 377.5,844.05 384.5,849.01 391.5,840.73 398.5,837.93 405.5,826.73 412.5,813.32 419.5,808.63 426.5,807.81 433.5,799.55 440.5,792.55 447.5,784.48 454.5,777.19 461.5,769.22 468.5,775.51 475.5,782.91 482.5,790.93 489.5,800.26 496.5,804.15 503.5,799.32 510.5,788.64 517.5,783.50 524.5,783.21 531.5,778.83 538.5,753.13 545.5,740.86 552.5,749.12 559.5,760.62 566.5,766.20 573.5,776.33 580.5,788.08 587.5,801.43 594.5,831.94 601.5,857.67 608.5,874.04 615.5,889.88 622.5,909.67 629.5,922.47 636.5,929.19 643.5,936.53 650.5,938.52 657.5,932.50 664.5,928.61 671.5,925.82 678.5,924.09 685.5,920.47 692.5,916.32 699.5,912.42 706.5,908.59 713.5,905.03 720.5,904.14 727.5,906.10 734.5,905.43 741.5,905.59 748.5,901.99 755.5,895.95 762.5,886.71 769.5,871.26 776.5,863.41 783.5,855.84 790.5,845.70 797.5,838.36 804.5,836.93 811.5,830.91 818.5,826.35 825.5,826.94 832.5,830.65 839.5,843.11 846.5,855.33 853.5,867.22 860.5,875.07 867.5,891.79 874.5,898.15 881.5,902.23 888.5,899.63 895.5,896.51 902.5,894.25 909.5,898.89 916.5,903.89 923.5,914.11 930.5,921.34 937.5,932.34 944.5,939.22 951.5,941.11 958.5,936.66 965.5,935.01 972.5,933.60 979.5,928.76 986.5,929.48 993.5,931.97 1000.5,935.35 1007.5,938.80 1014.5,941.64 1021.5,935.96 1028.5,930.93 1035.5,929.49 1042.5,924.69 1049.5,923.81 1056.5,918.43 1063.5,918.70 1070.5,922.46 1077.5,921.05 1084.5,911.80 1091.5,905.93 1098.5,900.18 1105.5,895.50 1112.5,894.30 1119.5,894.62 1126.5,895.22 1133.5,892.85 1140.5,888.33 1147.5,879.75 1154.5,869.45 1161.5,860.81 1168.5,853.10 1175.5,847.59 1182.5,843.54 1189.5,856.31 1196.5,861.49 1203.5,872.33 1210.5,884.77 1217.5,893.46 1224.5,899.71 1231.5,905.51 1238.5,909.07 1245.5,906.58 1252.5,906.97 1259.5,908.69 1266.5,914.32 1273.5,923.25 1280.5,924.97 1287.5,926.31 1294.5,925.84 1301.5,925.16 1308.5,921.14 1315.5,919.25 1322.5,912.23 1329.5,908.39 1336.5,910.73 1343.5,927.27 1350.5,942.34 1357.5,950.31" fill="none" stroke="#ffffff" stroke-width="1" shape-rendering="crispEdges" /><polyline points="167.5,834.05 174.5,834.54 181.5,836.08 188.5,838.32 195.5,841.31 202.5,844.66 209.5,847.81 216.5,850.40 223.5,853.04 230.5,854.75 237.5,855.94 244.5,854.64 251.5,850.54 258.5,844.84 265.5,837.44 272.5,830.69 279.5,824.80 286.5,821.01 293.5,819.12 300.5,819.52 307.5,821.25 314.5,823.63 321.5,826.99 328.5,830.00 335.5,832.48 342.5,834.61 349.5,835.60 356.5,835.32 363.5,835.10 370.5,835.47 377.5,837.19 384.5,839.55 391.5,839.79 398.5,839.42 405.5,836.88 412.5,832.17 419.5,827.46 426.5,823.53 433.5,818.73 440.5,813.50 447.5,807.69 454.5,801.59 461.5,795.12 468.5,791.20 475.5,789.54 482.5,789.82 489.5,791.91 496.5,794.35 503.5,795.35 510.5,794.01 517.5,791.91 524.5,790.17 531.5,787.90 538.5,780.95 545.5,772.93 552.5,768.17 559.5,766.66 566.5,766.57 573.5,768.52 580.5,772.43 587.5,778.23 594.5,788.97 601.5,802.71 608.5,816.98 615.5,831.56 622.5,847.18 629.5,862.24 636.5,875.63 643.5,887.81 650.5,897.95 657.5,904.86 664.5,909.61 671.5,912.85 678.5,915.10 685.5,916.17 692.5,916.20 699.5,915.45 706.5,914.08 713.5,912.27 720.5,910.64 727.5,909.73 734.5,908.87 741.5,908.22 748.5,906.97 755.5,904.77 762.5,901.15 769.5,895.18 776.5,888.82 783.5,882.23 790.5,874.92 797.5,867.61 804.5,861.47 811.5,855.36 818.5,849.56 825.5,845.04 832.5,842.16 839.5,842.35 846.5,844.95 853.5,849.40 860.5,854.53 867.5,861.99 874.5,869.22 881.5,875.82 888.5,880.58 895.5,883.77 902.5,885.87 909.5,888.47 916.5,891.55 923.5,896.07 930.5,901.12 937.5,907.36 944.5,913.74 951.5,919.21 958.5,922.70 965.5,925.16 972.5,926.85 979.5,927.23 986.5,927.68 993.5,928.54 1000.5,929.90 1007.5,931.68 1014.5,933.67 1021.5,934.13 1028.5,933.49 1035.5,932.69 1042.5,931.09 1049.5,929.63 1056.5,927.39 1063.5,925.65 1070.5,925.01 1077.5,924.22 1084.5,921.74 1091.5,918.58 1098.5,914.90 1105.5,911.02 1112.5,907.67 1119.5,905.06 1126.5,903.09 1133.5,901.04 1140.5,898.50 1147.5,894.75 1154.5,889.69 1161.5,883.91 1168.5,877.75 1175.5,871.72 1182.5,866.08 1189.5,864.13 1196.5,863.60 1203.5,865.35 1210.5,869.23 1217.5,874.08 1224.5,879.20 1231.5,884.47 1238.5,889.39 1245.5,892.83 1252.5,895.66 1259.5,898.26 1266.5,901.47 1273.5,905.83 1280.5,909.66 1287.5,912.99 1294.5,915.56 1301.5,917.48 1308.5,918.21 1315.5,918.42 1322.5,917.18 1329.5,915.42 1336.5,914.48 1343.5,917.04 1350.5,922.10 1357.5,927.74" fill="none" stroke="#f2d84a" stroke-width="1" shape-rendering="crispEdges" />
<line x1="329" y1="67.4" x2="1425" y2="512.5" stroke="#17a4ee" stroke-width="1" shape-rendering="crispEdges"/>
<rect x="1015.5" y="491.5" width="154" height="59" fill="none" stroke="#19a3e6" stroke-width="1" shape-rendering="crispEdges"/>
<circle cx="1015.5" cy="550.5" r="5" fill="#121212" stroke="#a4c0f8" stroke-width="1"/>
<circle cx="1169.5" cy="491.5" r="5" fill="#121212" stroke="#a4c0f8" stroke-width="1"/>
<rect x="-2" y="14.5" width="5" height="5.5" fill="#3d7cf0"/><rect x="-2" y="16.5" width="3" height="1.5" fill="#121212"/>
<path d="M0,43.5 L2,45 L6,41" fill="none" stroke="#c8c8c8" stroke-width="1.6"/>
<path d="M0,733.5 L2,735 L6,731" fill="none" stroke="#c8c8c8" stroke-width="1.6"/>
<line x1="518" y1="55" x2="537.5" y2="73" stroke="#f06a5a" stroke-width="1"/>
<polyline points="1330,718 1341,717 1348,716" fill="none" stroke="#23ad3a" stroke-width="1"/>
</svg>
<div class="t" style="left:13px;top:10px;font-size:15px;letter-spacing:-0.2px;color:#3d7cf0">铜2501-铝2501 (A*1-B*4) A=cu2501 B=al2501</div>
<div class="t" style="left:13px;top:35px;font-size:15px;letter-spacing:-0.45px;color:#e8e8e8">MA(5,10,20,30,60,120)</div>
<div class="t" style="left:168px;top:35px;font-size:15px;letter-spacing:-0.3px;color:#e8e8e8">MA5: -662.00</div>
<div class="t" style="left:266px;top:35px;font-size:15px;letter-spacing:-0.3px;color:#ecd24a">MA10: -1498.00</div>
<div class="t" style="left:381px;top:35px;font-size:15px;letter-spacing:-0.3px;color:#f040d0">MA20: -2808.00</div>
<div class="t" style="left:494px;top:35px;font-size:15px;letter-spacing:-0.3px;color:#9a86ee">MA30: -3252.00</div>
<div class="t" style="left:608px;top:35px;font-size:15px;letter-spacing:-0.3px;color:#a8e428">MA60: -4566.17</div>
<div class="t" style="left:485px;top:46px;font-size:15px;letter-spacing:-0.4px;color:#f06a5a">3980</div>
<div class="t" style="left:1132px;top:472px;font-size:15px;letter-spacing:-0.4px;color:#19a3e6">-4778</div>
<div class="t" style="left:1132px;top:531px;font-size:15px;letter-spacing:-0.4px;color:#19a3e6">-6016</div>
<div style="position:absolute;left:0;top:0;width:1425px;height:722px;overflow:hidden"><div class="t" style="left:1291px;top:709px;font-size:15px;letter-spacing:-0.4px;color:#23ad3a">-9510</div></div>
<div class="t" style="left:13px;top:725px;font-size:15px;letter-spacing:-0.3px;color:#e8e8e8">MACD(12,26,9)</div>
<div class="t" style="left:123px;top:725px;font-size:15px;letter-spacing:-0.3px;color:#e8e8e8">DIFF 1133.56</div>
<div class="t" style="left:218px;top:725px;font-size:15px;letter-spacing:-0.3px;color:#ecd24a">DEA 848.06</div>
<div class="t" style="left:304px;top:725px;font-size:15px;letter-spacing:-0.3px;color:#f06a5a">MACD 571.02</div>
<div style="position:absolute;left:462px;top:587px;width:76px;height:19px;background:#fffff0;border:1px solid #606060"></div>
<div class="t" style="left:465px;top:590px;font-size:12px;letter-spacing:0.3px;word-spacing:1px;color:#000">截图(Alt + A)</div>
</body></html>
